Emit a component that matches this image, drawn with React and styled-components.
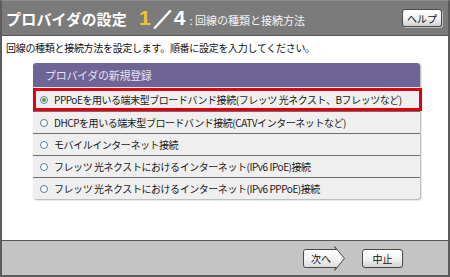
import React from "react";
import styled, { createGlobalStyle } from "styled-components";

const GlobalStyle = createGlobalStyle`
  html, body {
    margin: 0;
    padding: 0;
    background: #ffffff;
  }
  body {
    font-family: "Noto Sans CJK JP", "Noto Sans", sans-serif;
  }
`;

const Window = styled.div`
  box-sizing: border-box;
  width: 450px;
  height: 277px;
  border: 2px solid #5c5c5c;
  border-top: 1px solid #8e8e8e;
  display: flex;
  flex-direction: column;
  background: #ffffff;
`;

const TitleBar = styled.div`
  height: 34px;
  flex: none;
  background: #7b7b7b;
  border-bottom: 1px solid #555555;
  display: flex;
  align-items: center;
  justify-content: space-between;
  padding: 0 6px 0 4px;
`;

const Title = styled.div`
  display: flex;
  align-items: baseline;
  color: #ffffff;
  white-space: nowrap;
`;

const TitleMain = styled.span`
  font-size: 15px;
  font-weight: bold;
  letter-spacing: 0.2px;
`;

const Step = styled.span`
  font-family: "Liberation Sans", "Noto Sans", sans-serif;
  font-size: 21px;
  font-weight: bold;
  color: ${(p) => p.color};
  margin-left: ${(p) => p.gap}px;
`;

const SubTitle = styled.span`
  font-size: 11px;
  color: #f4f4f4;
  margin-left: 4px;
`;

const SmallButton = styled.button`
  box-sizing: border-box;
  height: ${(p) => p.h || 17}px;
  width: ${(p) => p.w}px;
  padding: 0;
  border: 1px solid #4a4a4a;
  border-radius: 3px;
  background: linear-gradient(#ffffff, #f2f2f2 55%, #d2d2d2);
  box-shadow: 1px 1px 0 #bdbdbd;
  font-family: "Noto Sans CJK JP", sans-serif;
  font-size: 10px;
  color: #111111;
  display: flex;
  align-items: center;
  justify-content: center;
`;

const Body = styled.div`
  flex: 1;
  padding: 5px 0 0 4px;
  display: flex;
  flex-direction: column;
`;

const Intro = styled.p`
  margin: 0;
  font-size: 10px;
  letter-spacing: -0.3px;
  color: #111111;
  line-height: 14px;
`;

const Panel = styled.div`
  margin: 8px 0 0 27px;
  width: 387px;
  background: #efefef;
  border-radius: 3px;
  box-shadow: 1px 1px 2px #a8a8a8;
`;

const PanelHead = styled.div`
  height: 24px;
  background: #6f6496;
  border-radius: 3px 3px 0 0;
  color: #e4e0f0;
  font-size: 11px;
  letter-spacing: -0.3px;
  display: flex;
  align-items: center;
  padding-left: 12px;
`;

const Row = styled.label`
  box-sizing: border-box;
  height: ${(p) => (p.selected ? 23 : 22)}px;
  display: flex;
  align-items: center;
  gap: 6px;
  padding-left: ${(p) => (p.selected ? 1 : 4)}px;
  font-size: 10px;
  letter-spacing: -0.45px;
  color: #1a1a1a;
  white-space: nowrap;
  border-top: ${(p) => (p.selected ? "none" : "1px solid #6e6e6e")};
  border: ${(p) => (p.selected ? "3px solid #e00010" : undefined)};
  margin-right: ${(p) => (p.selected ? -2 : 0)}px;
  margin-top: ${(p) => (p.selected ? 1 : 0)}px;
  &:last-child {
    border-radius: 0 0 3px 3px;
  }
`;

const Radio = styled.span`
  box-sizing: border-box;
  width: 8px;
  height: 8px;
  margin-left: 3px;
  border-radius: 50%;
  border: 1px solid #5a7a9a;
  background: #ffffff;
  display: flex;
  align-items: center;
  justify-content: center;
  &::after {
    content: "";
    width: 4px;
    height: 4px;
    border-radius: 50%;
    background: ${(p) => (p.checked ? "#3aa040" : "transparent")};
  }
`;

const Footer = styled.div`
  height: 34px;
  flex: none;
  background: #c4c4c4;
  border-top: 1px solid #555555;
  display: flex;
  align-items: center;
  justify-content: flex-end;
  gap: 16px;
  padding-right: 45px;
`;

const NextButton = styled.button`
  position: relative;
  width: 44px;
  height: 25px;
  padding: 0 6px 0 0;
  border: none;
  background: none;
  font-family: "Noto Sans CJK JP", sans-serif;
  font-size: 10px;
  color: #111111;
  display: flex;
  align-items: center;
  justify-content: center;
  svg {
    position: absolute;
    inset: 0;
  }
  span {
    position: relative;
  }
`;

const options = [
  "PPPoEを用いる端末型ブロードバンド接続(フレッツ 光ネクスト、Bフレッツなど)",
  "DHCPを用いる端末型ブロードバンド接続(CATVインターネットなど)",
  "モバイルインターネット接続",
  "フレッツ 光ネクストにおけるインターネット(IPv6 IPoE)接続",
  "フレッツ 光ネクストにおけるインターネット(IPv6 PPPoE)接続",
];

const App = () => {
  return (
    <>
      <GlobalStyle />
      <Window>
        <TitleBar>
          <Title>
            <TitleMain>プロバイダの設定</TitleMain>
            <Step color="#f2c230" gap={12}>1</Step>
            <Step color="#ffffff" gap={2}>／4</Step>
            <SubTitle>: 回線の種類と接続方法</SubTitle>
          </Title>
          <SmallButton w={40} h={18}>ヘルプ</SmallButton>
        </TitleBar>
        <Body>
          <Intro>回線の種類と接続方法を設定します。順番に設定を入力してください。</Intro>
          <Panel>
            <PanelHead>プロバイダの新規登録</PanelHead>
            {options.map((text, i) => (
              <Row key={text} selected={i === 0}>
                <Radio checked={i === 0} />
                {text}
              </Row>
            ))}
          </Panel>
        </Body>
        <Footer>
          <NextButton>
            <svg width="44" height="25" viewBox="0 0 44 25">
              <defs>
                <linearGradient id="nextg" x1="0" y1="0" x2="0" y2="1">
                  <stop offset="0" stopColor="#ffffff" />
                  <stop offset="0.55" stopColor="#f2f2f2" />
                  <stop offset="1" stopColor="#d0d0d0" />
                </linearGradient>
              </defs>
              <path
                d="M3.5 3.5 H34.5 L32.5 0.5 L42.5 12.5 L32.5 24.5 L34.5 21.5 H3.5 Q1.5 21.5 1.5 19.5 V5.5 Q1.5 3.5 3.5 3.5 Z"
                fill="url(#nextg)"
                stroke="#4a4a4a"
                strokeWidth="1"
              />
            </svg>
            <span>次へ</span>
          </NextButton>
          <SmallButton w={41} h={19}>中止</SmallButton>
        </Footer>
      </Window>
    </>
  );
};

export default App;
